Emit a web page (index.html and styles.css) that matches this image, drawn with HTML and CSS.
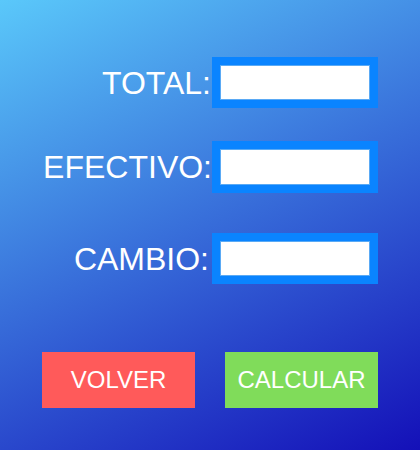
FILE: index.html
```html
<!DOCTYPE html>
<html lang="es">
<head>
<meta charset="utf-8">
<title>Cambio</title>
<link rel="stylesheet" href="styles.css">
</head>
<body>
<main class="screen">
  <form class="form">
    <div class="row row-total">
      <label class="label" for="total">TOTAL:</label>
      <input class="field" id="total" type="text">
    </div>
    <div class="row row-efectivo">
      <label class="label" for="efectivo">EFECTIVO:</label>
      <input class="field" id="efectivo" type="text">
    </div>
    <div class="row row-cambio">
      <label class="label" for="cambio">CAMBIO:</label>
      <input class="field" id="cambio" type="text">
    </div>
    <div class="actions">
      <button type="button" class="btn btn-back">VOLVER</button>
      <button type="button" class="btn btn-calc">CALCULAR</button>
    </div>
  </form>
</main>
</body>
</html>
```
FILE: styles.css
```css
html, body {
  margin: 0;
  padding: 0;
}
body {
  width: 420px;
  height: 450px;
  overflow: hidden;
  font-family: "Liberation Sans", Arial, sans-serif;
}
.screen {
  width: 420px;
  height: 450px;
  background: linear-gradient(155deg, #5ac8fa 0%, #1410b8 100%);
  box-sizing: border-box;
  padding-top: 57px;
}
.form {
  display: flex;
  flex-direction: column;
}
.row {
  display: grid;
  grid-template-columns: 212px 166px;
  align-items: center;
  height: 51px;
}
.row-efectivo {
  margin-top: 33px;
  height: 52px;
}
.row-cambio {
  margin-top: 40px;
}
.label {
  justify-self: end;
  color: #ffffff;
  font-size: 32px;
  line-height: 1;
  white-space: nowrap;
}
.row-total .label {
  margin-right: 1px;
}
.row-cambio .label {
  margin-right: 3px;
}
.field {
  box-sizing: border-box;
  width: 166px;
  height: 100%;
  margin: 0;
  padding: 0;
  border: 8px solid #0a84ff;
  background: #ffffff;
  outline: none;
  box-shadow: inset 0 0 0 1px #5aaaf5;
}
.actions {
  display: flex;
  gap: 30px;
  margin-top: 68px;
  padding-left: 42px;
}
.btn {
  width: 153px;
  height: 56px;
  border: none;
  margin: 0;
  padding: 0;
  color: #ffffff;
  font-family: "Liberation Sans", Arial, sans-serif;
  font-size: 24px;
}
.btn-back {
  background: #ff5a5a;
}
.btn-calc {
  background: #80dc5a;
}
```
